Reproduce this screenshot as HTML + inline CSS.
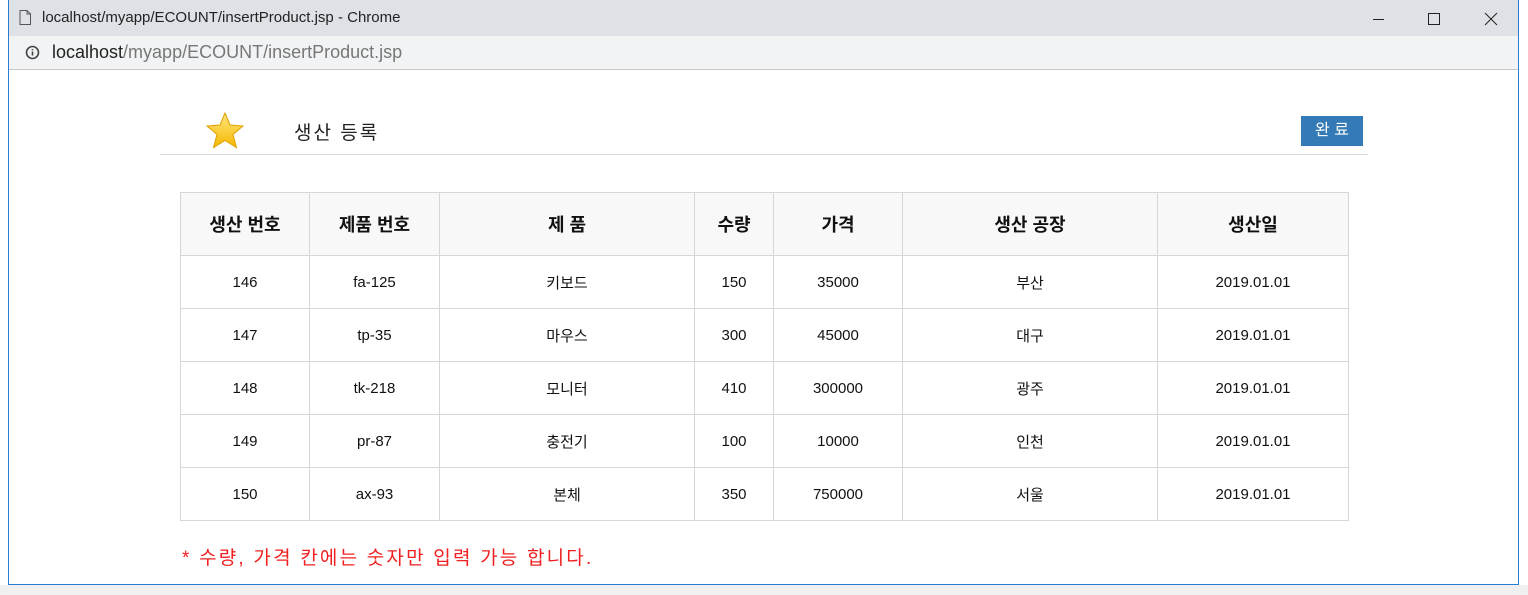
<!DOCTYPE html><html><head><meta charset="utf-8"><style>
body{margin:0;width:1528px;height:595px;background:#fff;position:relative;overflow:hidden;font-family:"Liberation Sans","Noto Sans CJK KR",sans-serif}
.win{position:absolute;left:8px;top:0;width:1511px;height:585px;border:1px solid #2b7cd3;border-top:none;box-sizing:border-box;background:#fff}
.title{position:absolute;left:0;top:0;width:100%;height:36px;background:#dee1e6;font-size:15px;color:#222}
.addr{position:absolute;left:0;top:36px;width:100%;height:33px;background:#f1f3f4;border-bottom:1px solid #c8c8c8;font-size:18px}
.out{position:absolute;left:0;top:585px;width:1528px;height:10px;background:#f0f0f0}
table{position:absolute;left:180px;top:192px;border-collapse:collapse;font-size:15px;color:#111}
td,th{border:1px solid #d6d6d6;text-align:center;padding:0}
th{height:62px;background:#f8f8f8;font-size:18px;font-weight:bold}
td{height:52px}
</style></head><body>
<div class="win">
<div class="title"><svg style="position:absolute;left:10px;top:10px" width="12" height="15"><path d="M1 .5h7l3.5 3.5v10.5h-10.5z M8 .5v3.5h3.5" fill="none" stroke="#555"/></svg><span style="position:absolute;left:33px;top:9px">localhost/myapp/ECOUNT/insertProduct.jsp - Chrome</span>
<svg style="position:absolute;left:1360px;top:12px" width="150" height="14"><path d="M4 7.5h11" stroke="#222"/><path d="M59.5 1.5h11v11h-11z" fill="none" stroke="#222"/><path d="M116 1l12 12M128 1l-12 12" stroke="#222"/></svg></div>
<div class="addr"><svg style="position:absolute;left:16px;top:9px" width="15" height="15"><circle cx="7.5" cy="7.5" r="6" fill="none" stroke="#444" stroke-width="1.6"/><path d="M7.5 6.5v4M7.5 4v1.3" stroke="#444" stroke-width="1.6"/></svg><span style="position:absolute;left:43px;top:6px;color:#222">localhost<span style="color:#777">/myapp/ECOUNT/insertProduct.jsp</span></span></div>
</div>
<div class="out"></div>
<svg style="position:absolute;left:205px;top:111px" width="40" height="40" viewBox="0 0 40 40"><defs><linearGradient id="g" x1="0" y1="0" x2="0" y2="1"><stop offset="0" stop-color="#ffe680"/><stop offset="1" stop-color="#f5b800"/></linearGradient></defs><path d="M20 2l5 12 13 1-10 8.5 3.5 13L20 29.5 8.5 36.5l3.5-13L2 15l13-1z" fill="url(#g)" stroke="#e0a000"/></svg>
<div style="position:absolute;left:294px;top:118px;font-size:19px;color:#222;letter-spacing:2px">생산 등록</div>
<div style="position:absolute;left:1301px;top:116px;width:62px;height:30px;background:#337ab7;color:#fff;font-size:16px;line-height:30px;text-align:center">완 료</div>
<div style="position:absolute;left:160px;top:154px;width:1208px;height:1px;background:#d6d6d6"></div>
<table>
<tr><th style="width:128px">생산 번호</th><th style="width:129px">제품 번호</th><th style="width:254px">제 품</th><th style="width:78px">수량</th><th style="width:128px">가격</th><th style="width:254px">생산 공장</th><th style="width:190px">생산일</th></tr>
<tr><td>146</td><td>fa-125</td><td>키보드</td><td>150</td><td>35000</td><td>부산</td><td>2019.01.01</td></tr>
<tr><td>147</td><td>tp-35</td><td>마우스</td><td>300</td><td>45000</td><td>대구</td><td>2019.01.01</td></tr>
<tr><td>148</td><td>tk-218</td><td>모니터</td><td>410</td><td>300000</td><td>광주</td><td>2019.01.01</td></tr>
<tr><td>149</td><td>pr-87</td><td>충전기</td><td>100</td><td>10000</td><td>인천</td><td>2019.01.01</td></tr>
<tr><td>150</td><td>ax-93</td><td>본체</td><td>350</td><td>750000</td><td>서울</td><td>2019.01.01</td></tr>
</table>
<div style="position:absolute;left:182px;top:543px;font-size:19px;color:#f02020;letter-spacing:2.2px">* 수량, 가격 칸에는 숫자만 입력 가능 합니다.</div>
</body></html>
